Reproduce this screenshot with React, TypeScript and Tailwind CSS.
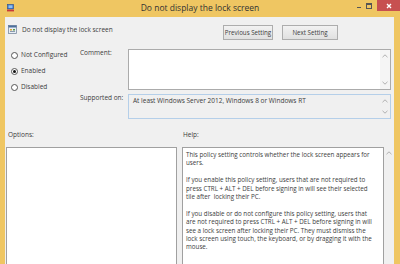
import React from "react";

const helpLines = [
  "This policy setting controls whether the lock screen appears for",
  "users.",
  "",
  "If you enable this policy setting, users that are not required to",
  "press CTRL + ALT + DEL before signing in will see their selected",
  "tile after  locking their PC.",
  "",
  "If you disable or do not configure this policy setting, users that",
  "are not required to press CTRL + ALT + DEL before signing in will",
  "see a lock screen after locking their PC. They must dismiss the",
  "lock screen using touch, the keyboard, or by dragging it with the",
  "mouse.",
];

function Chevron({ down }: { down?: boolean }) {
  return (
    <svg width="6" height="4" viewBox="0 0 6 4" className="block">
      <path
        d={down ? "M0.5 0.8 L3 3.2 L5.5 0.8" : "M0.5 3.2 L3 0.8 L5.5 3.2"}
        fill="none"
        stroke="#a8a8a8"
        strokeWidth="0.9"
      />
    </svg>
  );
}

function ScrollCol({ className }: { className?: string }) {
  return (
    <div
      className={
        "flex w-[10px] shrink-0 flex-col items-center justify-between py-[4px] " +
        (className ?? "")
      }
    >
      <Chevron />
      <Chevron down />
    </div>
  );
}

function Radio({ label, checked }: { label: string; checked?: boolean }) {
  return (
    <div className="flex h-[16px] items-center gap-[3px]">
      <span className="flex h-[7px] w-[7px] items-center justify-center rounded-full border border-[#555] bg-white">
        {checked && <span className="h-[3px] w-[3px] rounded-full bg-[#111]" />}
      </span>
      <span>{label}</span>
    </div>
  );
}

function Btn({ label, w }: { label: string; w: string }) {
  return (
    <div
      className={
        "flex h-[15px] items-center justify-center whitespace-nowrap border border-[#adadad] bg-gradient-to-b from-[#f2f2f2] to-[#e0e0e0] text-[6.2px] " +
        w
      }
    >
      {label}
    </div>
  );
}

export default function App() {
  return (
    <div
      className="flex h-[264px] w-[400px] flex-col overflow-hidden bg-[#efc662] text-[6.5px] leading-[8px] text-[#3c3c3c]"
      style={{ fontFamily: '"Open Sans", "Noto Sans", sans-serif' }}
    >
      {/* Title bar */}
      <div className="relative flex h-[17px] shrink-0 items-start">
        <svg width="7" height="8" viewBox="0 0 7 8" className="ml-[7px] mt-[4px]">
          <rect x="0.5" y="0.5" width="6" height="4.5" fill="#3a6fc4" stroke="#27508f" strokeWidth="0.6" />
          <rect x="1.5" y="1.3" width="4" height="2.8" fill="#8fc1f2" />
          <rect x="0" y="5.6" width="7" height="1.8" fill="#c83a3a" />
        </svg>
        <div className="absolute left-0 right-0 top-[2px] text-center text-[8.5px] leading-[12px] text-[#333]">
          Do not display the lock screen
        </div>
        <div className="ml-auto flex items-start">
          <div className="mt-[7px] h-[1px] w-[4px] bg-[#555]" />
          <div className="ml-[5px] mt-[3px] h-[6px] w-[6px] border border-t-2 border-[#555]" />
          <div className="ml-[5px] flex h-[11px] w-[23px] items-center justify-center bg-[#c75050]">
            <svg width="6" height="6" viewBox="0 0 6 6">
              <path d="M1 1 L5 5 M5 1 L1 5" stroke="white" strokeWidth="1.4" />
            </svg>
          </div>
        </div>
      </div>

      {/* Body */}
      <div className="ml-[5px] mr-[6px] flex flex-1 flex-col bg-[#f0f0f0]">
        <div className="flex h-[23px] items-start">
          <div className="flex flex-1 items-center gap-[5px] pl-[3px] pt-[8px]">
            <svg width="9" height="9" viewBox="0 0 9 9">
              <rect x="0.5" y="0.5" width="8" height="8" fill="#e8eef5" stroke="#6b7c93" strokeWidth="0.7" />
              <rect x="0.5" y="0.5" width="8" height="2" fill="#4d6f9c" />
              <rect x="2" y="4" width="2" height="1.5" fill="#d9a23a" />
              <rect x="5" y="4" width="2" height="1.5" fill="#5a9c4d" />
              <rect x="2" y="6" width="5" height="1" fill="#8a9ab0" />
            </svg>
            <span>Do not display the lock screen</span>
          </div>
          <div className="mr-[56px] mt-[8px] flex gap-[9px]">
            <Btn label="Previous Setting" w="w-[50px]" />
            <Btn label="Next Setting" w="w-[56px]" />
          </div>
        </div>

        <div className="mt-[7px] flex">
          <div className="w-[75px] pl-[6px]">
            <Radio label="Not Configured" />
            <Radio label="Enabled" checked />
            <Radio label="Disabled" />
          </div>
          <div className="mt-[2px] flex flex-col gap-[4px]">
            <div className="flex">
              <div className="w-[48px]">Comment:</div>
              <div className="flex h-[41px] w-[263px] border border-[#ababab] bg-white">
                <div className="flex-1" />
                <ScrollCol className="bg-[#f5f5f5]" />
              </div>
            </div>
            <div className="flex">
              <div className="w-[48px]">Supported on:</div>
              <div className="flex h-[25px] w-[263px] border border-[#b5cfe9] bg-[#f0f0f0]">
                <div className="flex-1 pl-[4px] pt-[2px]">
                  At least Windows Server 2012, Windows 8 or Windows RT
                </div>
                <ScrollCol className="py-[2px]" />
              </div>
            </div>
          </div>
        </div>

        <div className="mt-[12px] flex h-[8px]">
          <div className="w-[178px] pl-[3px]">Options:</div>
          <div>Help:</div>
        </div>

        <div className="mt-[8px] flex flex-1">
          <div className="ml-[1px] w-[171px] border border-b-0 border-[#a0a0a0] bg-white" />
          <div className="ml-[5px] flex-1 whitespace-pre border border-b-0 border-[#a0a0a0] bg-white pl-[3px] pt-[3px] text-[6.25px] leading-[8.4px]">
            {helpLines.map((l, i) => (
              <div key={i} className="h-[8.4px]">
                {l}
              </div>
            ))}
          </div>
          <div className="flex w-[10px] justify-center pt-[4px]">
            <Chevron />
          </div>
        </div>
      </div>
    </div>
  );
}
